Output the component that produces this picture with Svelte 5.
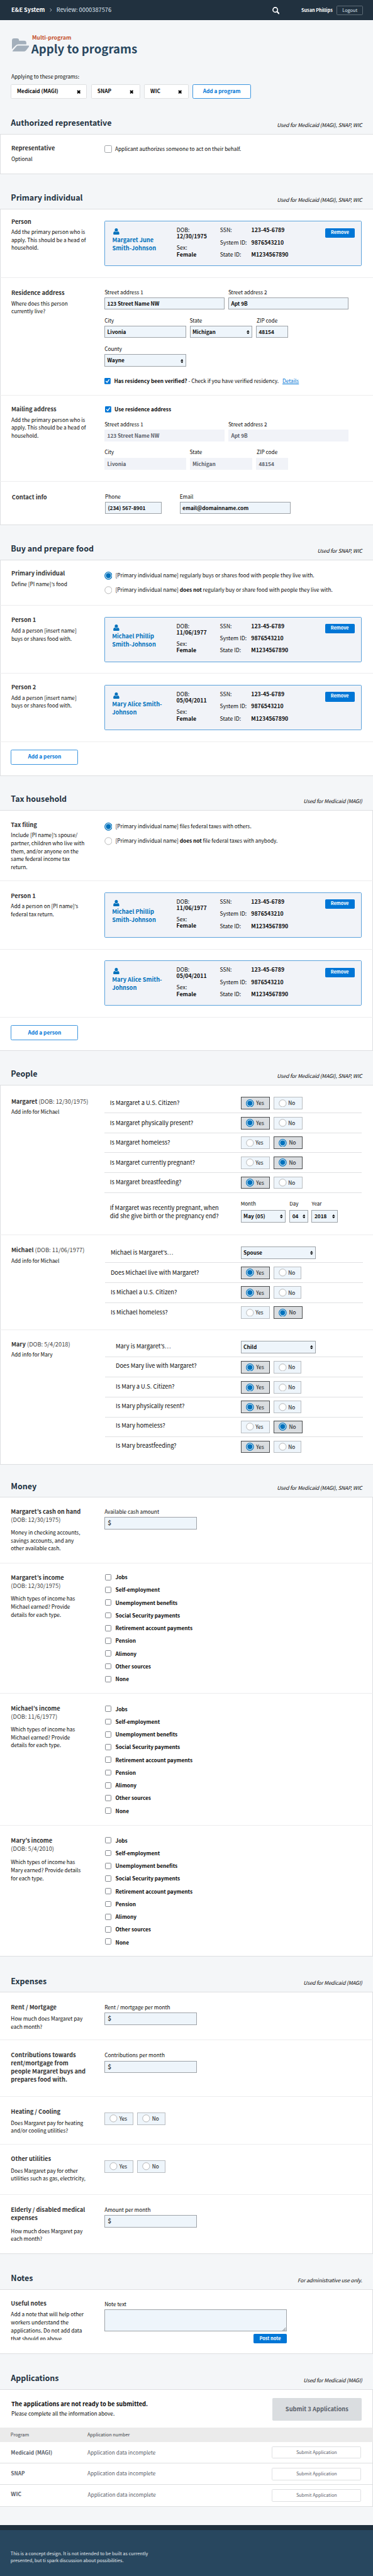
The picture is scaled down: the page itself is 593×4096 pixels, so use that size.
<script>
  const sources = [
    'Jobs', 'Self-employment', 'Unemployment benefits', 'Social Security payments',
    'Retirement account payments', 'Pension', 'Alimony', 'Other sources', 'None'
  ];
  const all = 'Used for Medicaid (MAGI), SNAP, WIC';
  const incomes = [
    { who: 'Margaret’s income', dob: '(DOB: 12/30/1975)', text: 'Which types of income has Michael earned? Provide details for each type.', cls: 'inc1' },
    { who: 'Michael’s income', dob: '(DOB: 11/6/1977)', text: 'Which types of income has Michael earned? Provide details for each type.', cls: 'inc2' },
    { who: 'Mary’s income', dob: '(DOB: 5/4/2010)', text: 'Which types of income has Mary earned? Provide details for each type.', cls: 'inc3' }
  ];
  const margaret = [
    { q: 'Is Margaret a U.S. Citizen?', a: 'Yes', h: 76.4 },
    { q: 'Is Margaret physically present?', a: 'Yes', h: 55 },
    { q: 'Is Margaret homeless?', a: 'No', h: 53.8 },
    { q: 'Is Margaret currently pregnant?', a: 'No', h: 54.9 },
    { q: 'Is Margaret breastfeeding?', a: 'Yes', h: 54.9 }
  ];
  const michael = [
    { q: 'Michael is Margaret’s…', select: 'Spouse', h: 76.9 },
    { q: 'Does Michael live with Margaret?', a: 'Yes', h: 55.1 },
    { q: 'Is Michael a U.S. Citizen?', a: 'Yes', h: 54.5 },
    { q: 'Is Michael homeless?', a: 'No', h: 55 }
  ];
  const mary = [
    { q: 'Mary is Margaret’s…', select: 'Child', h: 75.1 },
    { q: 'Does Mary live with Margaret?', a: 'Yes', h: 55 },
    { q: 'Is Mary a U.S. Citizen?', a: 'Yes', h: 55.5 },
    { q: 'Is Mary physically resent?', a: 'Yes', h: 53.9 },
    { q: 'Is Mary homeless?', a: 'No', h: 54.6 },
    { q: 'Is Mary breastfeeding?', a: 'Yes', h: 55 }
  ];
  const applications = [
    { name: 'Medicaid (MAGI)', cls: 'a1' },
    { name: 'SNAP', cls: 'a2' },
    { name: 'WIC', cls: 'a3' }
  ];
</script>

{#snippet head(title, note, h)}
  <header class="sec" style:height="{h}px"><h2>{title}</h2><em>{note}</em></header>
{/snippet}

{#snippet person(first, last, dob)}
  <div class="person">
    <div class="who">
      <svg class="user" viewBox="0 0 17 18"><ellipse cx="8.5" cy="4.6" rx="4.3" ry="4.6" /><path d="M4.2 8.6C1.6 8.8.2 11.2.2 14.8.2 16.8 1.2 18 3 18h11c1.800 0 2.800-1.200 2.800-3.200 0-3.600-1.400-6-4-6.200C11.600 9.700 10.200 10.400 8.500 10.400S5.400 9.700 4.200 8.600z" /></svg>
      <strong>{first}<br />{last}</strong>
    </div>
    <div class="bio">
      <div>DOB:<br /><b>{dob}</b></div>
      <div>Sex:<br /><b>Female</b></div>
    </div>
    <dl>
      <dt>SSN:</dt><dd>123-45-6789</dd>
      <dt>System ID:</dt><dd>9876543210</dd>
      <dt>State ID:</dt><dd>M1234567890</dd>
    </dl>
    <span class="solid remove">Remove</span>
  </div>
{/snippet}

{#snippet select(label, value, cls)}
  <div class="field {cls}">
    {#if label}<span class="lab">{label}</span>{/if}
    <div class="input sel"><span>{value}</span>
      <svg viewBox="0 0 8 11"><path d="M4 0l4 4.600H0zM4 11l4-4.600H0z" /></svg>
    </div>
  </div>
{/snippet}

{#snippet field(label, value, cls)}
  <div class="field {cls}"><span class="lab">{label}</span><div class="input">{value}</div></div>
{/snippet}

{#snippet radio(on)}
  <svg class="radio" viewBox="0 0 22 22">
    {#if on}
      <circle cx="11" cy="11" r="9.800" fill="#fff" stroke="#0071bc" stroke-width="2.200" /><circle cx="11" cy="11" r="7" fill="#0071bc" />
    {:else}
      <circle cx="11" cy="11" r="9.700" fill="#fff" stroke="#999" stroke-width="1.200" />
    {/if}
  </svg>
{/snippet}

{#snippet yesno(a, narrow)}
  <div class="yesno">
    <div class="opt" class:on={a === 'Yes'}>{@render radio(a === 'Yes')}<span>Yes</span></div>
    <div class="opt" class:on={a === 'No'} class:narrow={narrow && a !== 'No'}>{@render radio(a === 'No')}<span>No</span></div>
  </div>
{/snippet}

{#snippet tick()}
  <svg class="tick" viewBox="0 0 17 17"><rect width="17" height="17" rx="2.500" fill="#0076d6" /><path d="M4.400 9l3 3.200 5.300-7.700" fill="none" stroke="#fff" stroke-width="2.400" stroke-linecap="round" stroke-linejoin="round" /></svg>
{/snippet}

{#snippet questions(list, narrow)}
  {#each list as item}
    <div class="q" style:height="{item.h}px">
      <span class="ask">{item.q}</span>
      {#if item.select}{@render select('', item.select, 'w207')}{:else}{@render yesno(item.a, narrow)}{/if}
    </div>
  {/each}
{/snippet}

{#snippet times()}
  <svg class="times" viewBox="0 0 11 11"><path d="M1.700 1.700l7.600 7.600M9.300 1.700l-7.600 7.600" stroke="#000" stroke-width="3.400" /></svg>
{/snippet}

<div class="page">
  <nav>
    <b class="brand">E&amp;E System</b>
    <svg class="chev" viewBox="0 0 6 10"><path d="M1 .8L5 5 1 9.200" fill="none" stroke="#c8d0d8" stroke-width="1.500" /></svg>
    <span class="review">Review: 0000387576</span>
    <svg class="search" viewBox="0 0 20 20"><circle cx="8" cy="8" r="6.400" fill="none" stroke="#fff" stroke-width="2.800" /><path d="M12.800 12.800l5.200 5.200" stroke="#fff" stroke-width="3.600" stroke-linecap="round" /></svg>
    <b class="user-name">Susan Phillips</b>
    <span class="logout">Logout</span>
  </nav>

  <div class="title">
    <svg class="folder" viewBox="0 0 48 36"><path d="M0 6a6 6 0 0 1 6-6h7.500a6 6 0 0 1 6 6v.3h14a6 6 0 0 1 6 6v4H18c-3.500 0-6 1.200-8 3.700L0 30z" /><path d="M17 20h30.300c.8 0 1 .8.5 1.500L40 31.500C37.500 35 35.500 36 32 36H3c-1.500 0-1.800-1-.8-2.200L10.500 24c2.500-3 4-4 6.500-4z" /></svg>
    <div>
      <p class="multi">Multi-program</p>
      <h1>Apply to programs</h1>
    </div>
  </div>

  <p class="applying">Applying to these programs:</p>
  <div class="pills">
    <span class="pill p1">Medicaid (MAGI){@render times()}</span>
    <span class="pill p2">SNAP{@render times()}</span>
    <span class="pill p3">WIC{@render times()}</span>
    <span class="add prog">Add a program</span>
  </div>

  {@render head('Authorized representative', all, 97)}
  <div class="card left">
    <section class="auth">
      <div class="side"><h3>Representative</h3><p>Optional</p></div>
      <div class="main"><div class="line"><i class="box big"></i><span>Applicant authorizes someone to act on their behalf.</span></div></div>
    </section>
  </div>

  {@render head('Primary individual', all, 96.5)}
  <div class="card left">
    <section class="prim">
      <div class="side"><h3>Person</h3><p>Add the primary person who is apply. This should be a head of household.</p></div>
      <div class="main">{@render person('Margaret June', 'Smith-Johnson', '12/30/1975')}</div>
    </section>
    <section class="resid">
      <div class="side"><h3>Residence address</h3><p>Where does this person currently live?</p></div>
      <div class="main">
        <div class="fields">{@render field('Street address 1', '123 Street Name NW', 'w330')}{@render field('Street address 2', 'Apt 9B', 'w330')}</div>
        <div class="fields f2">{@render field('City', 'Livonia', 'w224')}{@render select('State', 'Michigan', 'w172')}{@render field('ZIP code', '48154', 'w88 inset')}</div>
        <div class="fields f3">{@render select('County', 'Wayne', 'w224 low')}</div>
        <div class="line verify">{@render tick()}<span><b>Has residency been verified?</b> - Check if you have verified residency.&nbsp; <u>Details</u></span></div>
      </div>
    </section>
    <section class="mail">
      <div class="side"><h3>Mailing address</h3><p>Add the primary person who is apply. This should be a head of household.</p></div>
      <div class="main off">
        <div class="line use">{@render tick()}<b>Use residence address</b></div>
        <div class="fields">{@render field('Street address 1', '123 Street Name NW', 'w330')}{@render field('Street address 2', 'Apt 9B', 'w330')}</div>
        <div class="fields f2">{@render field('City', 'Livonia', 'w224')}{@render field('State', 'Michigan', 'w172')}{@render field('ZIP code', '48154', 'w88 inset')}</div>
      </div>
    </section>
    <section class="contact">
      <div class="side"><h3>Contact info</h3></div>
      <div class="main"><div class="fields wide">{@render field('Phone', '(234) 567-8901', 'w155')}{@render field('Email', 'email@domainname.com', 'w304')}</div></div>
    </section>
  </div>

  {@render head('Buy and prepare food', 'Used for SNAP, WIC', 96.5)}
  <div class="card left">
    <section class="buy">
      <div class="side"><h3>Primary individual</h3><p>Define [PI name]’s food</p></div>
      <div class="main">
        <div class="line choice">{@render radio(true)}<span>[Primary individual name] regularly buys or shares food with people they live with.</span></div>
        <div class="line choice">{@render radio(false)}<span>[Primary individual name] <b>does not</b> regularly buy or share food with people they live with.</span></div>
      </div>
    </section>
    <section class="pers">
      <div class="side"><h3>Person 1</h3><p>Add a person [insert name] buys or shares food with.</p></div>
      <div class="main">{@render person('Michael Phillip', 'Smith-Johnson', '11/06/1977')}</div>
    </section>
    <section class="pers second">
      <div class="side"><h3>Person 2</h3><p>Add a person [insert name] buys or shares food with.</p></div>
      <div class="main">{@render person('Mary Alice Smith-', 'Johnson', '05/04/2011')}</div>
    </section>
    <section class="adder"><span class="add">Add a person</span></section>
  </div>

  {@render head('Tax household', 'Used for Medicaid (MAGI)', 96)}
  <div class="card right">
    <section class="tax">
      <div class="side"><h3>Tax filing</h3><p>Include [PI name]’s spouse/<br />partner, children who live with<br />them, and/or anyone on the<br />same federal income tax<br />return.</p></div>
      <div class="main">
        <div class="line choice">{@render radio(true)}<span>[Primary individual name] files federal taxes with others.</span></div>
        <div class="line choice">{@render radio(false)}<span>[Primary individual name] <b>does not</b> file federal taxes with anybody.</span></div>
      </div>
    </section>
    <section class="pers">
      <div class="side"><h3>Person 1</h3><p>Add a person on [PI name]’s federal tax return.</p></div>
      <div class="main">{@render person('Michael Phillip', 'Smith-Johnson', '11/06/1977')}</div>
    </section>
    <section class="pers">
      <div class="side"></div>
      <div class="main">{@render person('Mary Alice Smith-', 'Johnson', '05/04/2011')}</div>
    </section>
    <section class="adder short"><span class="add">Add a person</span></section>
  </div>

  {@render head('People', all, 95)}
  <div class="card left">
    <section class="mar">
      <div class="side"><h3>Margaret <span>(DOB: 12/30/1975)</span></h3><p>Add info for Michael</p></div>
      <div class="main qs">
        {@render questions(margaret, false)}
        <div class="q date">
          <span class="ask">If Margaret was recently pregnant, when<br />did she give birth or the pregnancy end?</span>
          <div class="fields">{@render select('Month', 'May (05)', 'w124')}{@render select('Day', '04', 'w51')}{@render select('Year', '2018', 'w72')}</div>
        </div>
      </div>
    </section>
    <section class="mic">
      <div class="side"><h3>Michael <span>(DOB: 11/06/1977)</span></h3><p>Add info for Michael</p></div>
      <div class="main qs shift">{@render questions(michael, true)}</div>
    </section>
    <section class="may">
      <div class="side"><h3>Mary <span>(DOB: 5/4/2018)</span></h3><p>Add info for Mary</p></div>
      <div class="main qs shift more">{@render questions(mary, true)}</div>
    </section>
  </div>

  {@render head('Money', all, 91)}
  <div class="card right">
    <section class="cash">
      <div class="side"><h3>Margaret’s cash on hand<br /><span>(DOB: 12/30/1975)</span></h3><p>Money in checking accounts, savings accounts, and any other available cash.</p></div>
      <div class="main money">{@render field('Available cash amount', '$', 'w253')}</div>
    </section>
    {#each incomes as inc}
      <section class="inc {inc.cls}">
        <div class="side"><h3>{inc.who}<br /><span>{inc.dob}</span></h3><p>{inc.text}</p></div>
        <div class="main">
          {#each sources as s}<div class="check"><i class="box"></i><b>{s}</b></div>{/each}
        </div>
      </section>
    {/each}
  </div>

  {@render head('Expenses', 'Used for Medicaid (MAGI)', 98.5)}
  <div class="card right exp">
    <section class="rent">
      <div class="side"><h3>Rent / Mortgage</h3><p>How much does Margaret pay each month?</p></div>
      <div class="main money">{@render field('Rent / mortgage per month', '$', 'w253')}</div>
    </section>
    <section class="contrib">
      <div class="side"><h3>Contributions towards rent/mortgage from<br />people Margaret buys and prepares food with.</h3></div>
      <div class="main money">{@render field('Contributions per month', '$', 'w253')}</div>
    </section>
    <section class="heat">
      <div class="side"><h3>Heating / Cooling</h3><p>Does Margaret pay for heating and/or cooling utilities?</p></div>
      <div class="main">{@render yesno('', true)}</div>
    </section>
    <section class="other">
      <div class="side"><h3>Other utilities</h3><p>Does Margaret pay for other utilities such as gas, electricity,</p></div>
      <div class="main">{@render yesno('', true)}</div>
    </section>
    <section class="elder">
      <div class="side"><h3>Elderly / disabled medical expenses</h3><p>How much does Margaret pay each month?</p></div>
      <div class="main money">{@render field('Amount per month', '$', 'w253')}</div>
    </section>
  </div>

  {@render head('Notes', 'For administrative use only.', 98.2)}
  <div class="card right">
    <section class="notes">
      <div class="side"><h3>Useful notes</h3><p>Add a note that will help other workers understand the applications. Do not add data that should go above.</p></div>
      <div class="main">
        <span class="lab">Note text</span>
        <div class="area"><svg viewBox="0 0 10 10"><path d="M0 10L10 0M3.500 10L10 3.500M7 10l3-3" stroke="#666" stroke-width="1.300" /></svg></div>
        <span class="solid post">Post note</span>
      </div>
    </section>
  </div>

  {@render head('Applications', 'Used for Medicaid (MAGI)', 98)}
  <div class="card right apps">
    <div class="ready">
      <div><strong>The applications are not ready to be submitted.</strong><p>Please complete all the information above.</p></div>
      <span class="submit">Submit 3 Applications</span>
    </div>
    <div class="trow th"><span>Program</span><span>Application number</span></div>
    {#each applications as a}
      <div class="trow {a.cls}"><b>{a.name}</b><span>Application data incomplete</span><span class="ghost">Submit Application</span></div>
    {/each}
  </div>

  <footer><p>This is a concept design. It is not intended to be built as currently<br />presented, but ti spark discussion about possibilities.</p></footer>
</div>

<style>
  :global(body) { background: #f4f6f8; overflow: hidden; }
  .page {
    zoom: 0.57888;
    height: 7076px;
    overflow: hidden;
    background: #f4f6f8;
    color: #0a0a0a;
    font: 14.3px/22px "Noto Sans CJK JP", "Noto Sans CJK SC", sans-serif;
    white-space: nowrap;
  }
  .page * { box-sizing: border-box; }
  p, h1, h2, h3, dl, dd { margin: 0; }
  svg { display: block; flex: none; }
  b, strong, h1, h2, h3 { font-weight: 700; }

  nav { height: 55px; display: flex; align-items: center; background: #21313f; color: #fff; padding: 0 27px 0 31px; font-size: 16.08px; }
  .brand { font-size: 15.9px; margin-right: 14px; }
  .chev { width: 6px; height: 10px; margin-right: 12px; margin-top: 1px; }
  .review { color: #dce4ef; flex: 1; }
  .brand, .review { padding-bottom: 2px; }
  .search { width: 20px; height: 20px; margin: 3px 60px 0 0; }
  .user-name { font-size: 12.5px; width: 97px; }
  .logout { width: 73px; height: 26px; line-height: 24px; border: 1px solid #5f6c77; border-radius: 3px; font-size: 12.6px; text-align: center; color: #dce4ef; margin-top: 1px; }

  .title { display: flex; height: 144.300px; padding: 38.400px 0 0 32px; }
  .folder { width: 48px; height: 36px; margin-top: 11.600px; fill: #a3afbb; }
  .multi { font-size: 15.1px; font-weight: 700; color: #c5502c; margin-left: 8px; }
  h1 { font-size: 32.17px; line-height: 36px; color: #28475f; margin: .8px 0 0 6px; }
  .applying { padding-left: 31px; height: 31.700px; }
  .pills { display: flex; gap: 10.700px; padding-left: 29px; height: 41px; }
  .pill { display: flex; justify-content: space-between; align-items: center; border: 1px solid #dfe0e2; border-radius: 3px; background: #fff; font-weight: 700; padding: 0 16px 3px 16px; }
  .pill .times { margin-top: 3.500px; }
  .p1 { width: 210px; } .p2 { width: 135px; } .p3 { width: 123px; }
  .times { width: 11px; height: 11px; }
  .add { display: flex; align-items: center; justify-content: center; width: 185px; height: 41px; border: 1px solid #3b95df; border-radius: 4px; background: #fff; color: #0076d6; font-weight: 700; padding-bottom: 3px; }
  .add.prog { width: 160px; }

  .sec { display: flex; justify-content: space-between; align-items: flex-end; padding: 0 30px 14.300px; border-bottom: 1px solid #dddfe1; }
  h2 { font-size: 21.5px; line-height: 30px; color: #21313f; }
  em { letter-spacing: -.2px; }

  .card { background: #fff; }
  .left { box-shadow: inset 1.730px 0 #dddfe1; }
  .right { box-shadow: inset -1.730px 0 #dddfe1; }
  section { display: grid; grid-template-columns: 287px 1fr; border-bottom: 2px solid #ededee; }
  section:last-child { border-bottom-color: #dddfe1; }
  .side { padding: calc(var(--s) + .5px) 0 0 31px; width: 240px; white-space: normal; }
  .right .side { padding-left: 30px; }
  .main { padding-top: var(--m); }
  h3 { font-size: 16.08px; line-height: 22px; color: #333; }
  h3 span { font-weight: 400; color: #444; white-space: nowrap; }
  .mar h3 { white-space: nowrap; }
  .side p { margin-top: 6.500px; }
  .exp .side p { margin-top: 9.300px; }

  .auth { height: 109px; --s: 27px; --m: 27.800px; }
  .prim { height: 189px; --s: 22px; --m: 32px; }
  .resid { height: 324px; --s: 29.400px; --m: 27.300px; }
  .mail { height: 236px; --s: 25px; --m: 24.800px; }
  .contact { height: 119px; --s: 31px; --m: 28.800px; }
  .contact h3 { padding-left: 1.500px; }
  .buy { height: 125px; --s: 24.500px; --m: 29.800px; }
  .pers { height: 187px; --s: 27.500px; --m: 30px; }
  .second { --s: 25px; }
  .adder { display: block; height: 93px; padding: 21px 0 0 30px; }
  .adder.short { height: 92px; }
  .tax { height: 194px; --s: 26.500px; --m: 30.800px; }
  .mar { height: 410.300px; --s: 31.500px; --m: 0px; }
  .mic { height: 261.400px; --s: 29.700px; --m: 0px; }
  .may { height: 369.300px; --s: 27.300px; --m: 0px; }
  .cash { height: 180.700px; --s: 27px; --m: 27.800px; }
  .cash p, .inc p { margin-top: 12.500px; }
  .inc1 { height: 358px; --s: 28px; --m: 19.600px; }
  .inc2 { height: 362.100px; --s: 29px; --m: 23.600px; }
  .inc3 { height: 360.200px; --s: 29px; --m: 22.500px; }
  .inc3 p { margin-top: 15.500px; }
  .rent { height: 131.500px; --s: 28.500px; --m: 28.500px; }
  .contrib { height: 154px; --s: 29px; --m: 29.500px; }
  .heat { height: 132px; --s: 29px; --m: 44px; }
  .other { height: 138px; --s: 28px; --m: 43px; }
  .elder { height: 162.300px; --s: 29px; --m: 29.400px; }
  .exp .elder p { margin-top: 14.100px; }
  .notes { height: 177.500px; --s: 26.500px; --m: 28.300px; }
  .notes p { margin-top: 7.800px; height: 82px; overflow: hidden; }

  .line { display: flex; align-items: center; height: 22px; }
  .box { display: block; flex: none; width: 17px; height: 17px; border: 1px solid #85898f; border-radius: 3px; background: #fff; }
  .box.big { width: 20px; height: 20px; margin: 3px 9px 0 0; border-color: #a3a6aa; border-radius: 4px; }
  .tick { width: 17px; height: 17px; margin: 3px 9.500px 0 0; }
  .use .tick { margin-left: 1px; }
  u { color: #0076d6; margin-left: 4px; }
  .radio { width: 22px; height: 22px; }
  .choice { height: 40px; align-items: flex-start; }
  .choice .radio { margin: 2px 9px 0 -1px; }
  .check { display: flex; align-items: center; height: 35px; gap: 11px; padding-left: 2px; }
  .check .box { margin-top: 1px; }
  .inc3 .check:last-child .box { margin-top: -3px; }

  .fields { display: flex; gap: 10px; }
  .fields.wide { gap: 50px; padding-left: 1.500px; }
  .f2 { margin-top: 17.700px; }
  .f3 { margin-top: 19px; }
  .verify { margin-top: 27px; }
  .use { margin-bottom: 19px; }
  .field { display: flex; flex-direction: column; }
  .lab { display: block; height: 26px; }
  .inset .lab { padding-left: 2px; }
  .input { height: 34px; border: 1px solid #9ea3a8; background: #eef5fb; font-weight: 700; padding: 0 6px 2px; line-height: 29.500px; }
  .off .input { border-color: #f1f3f8; background: #f1f3f8; color: #5b616b; }
  .sel { display: flex; justify-content: space-between; }
  .sel svg { width: 8px; height: 11px; margin-top: 10px; }
  .low .sel svg { margin-top: 12px; }
  .money .input { font-size: 17px; color: #444; padding-left: 7px; }
  .w330 { width: 330px; } .w224 { width: 224px; } .w172 { width: 172px; } .w88 { width: 88px; }
  .w155 { width: 155px; } .w304 { width: 304px; } .w124 { width: 124px; } .w51 { width: 51px; }
  .w72 { width: 72px; } .w207 { width: 207px; } .w253 { width: 253px; }

  .person { display: grid; grid-template-columns: 177px 119px 289px 81px; width: 707px; height: 125px; border: 1px solid #5ba2db; border-radius: 3px; background: #f1f3f8; padding-left: 19.500px; font-size: 15.1px; }
  .left .pers .person, .right .person { margin-left: -.5px; }
  .user { width: 17px; height: 18px; margin: 19px 0 3.500px 3px; fill: #0071bc; }
  .who strong { font-size: 16px; color: #0071bc; display: block; }
  .bio { line-height: 18px; padding-top: 15.500px; }
  .bio div { margin-bottom: 13px; }
  .person dl { display: grid; grid-template-columns: 86px 1fr; grid-auto-rows: 33.200px; line-height: 33.200px; padding-top: 7.700px; }
  dd { font-weight: 700; }
  .solid { display: block; background: #0076d6; color: #fff; font-weight: 700; border-radius: 3px; font-size: 12.5px; text-align: center; height: 26px; line-height: 24px; }
  .remove { margin-top: 18.500px; }

  .q { display: flex; align-items: flex-end; justify-content: space-between; width: 707px; padding: 0 0 9.500px 15px; border-bottom: 1px solid #e0e1e3; }
  .q:last-child { border-bottom-color: transparent; }
  .ask { font-size: 16.08px; margin-bottom: 7.200px; }
  .q > :global(:last-child) { width: 333px; }
  .q > .field .input { width: 207px; }
  .shift .q { margin-left: 2px; width: 707px; }
  .shift .q > :global(:last-child) { width: 335px; }
  .more .q { padding-left: 29px; }
  .more .ask { margin-bottom: 9.700px; }
  .date { align-items: flex-start; }
  .date .ask { line-height: 23px; padding-top: 29.600px; }
  .date .fields { padding-top: 20px; }
  .date .lab { height: 27px; font-size: 14px; }
  .yesno { display: flex; gap: 10px; }
  .opt { display: flex; align-items: center; width: 80px; height: 34px; border: 1px solid #b9bdc1; background: #eef5fb; padding-left: 12.500px; }
  .opt span { margin: 0 0 1px 4.500px; }
  .opt.on { background: #dadde0; border-color: #4a4c4e; }
  .opt.on span { margin-left: 6.500px; }
  .narrow { width: 77px; }

  .area { display: flex; align-items: flex-end; justify-content: flex-end; width: 500px; height: 60px; border: 1px solid #9ea3a8; background: #eef5fb; }
  .area svg { width: 9px; height: 9px; }
  .post { width: 90px; margin: 7px 0 0 410px; font-size: 12.7px; }

  .ready { display: flex; justify-content: space-between; height: 104px; padding: 23px 31px 0 31px; }
  .ready > div { padding-top: 4.500px; }
  .ready strong { font-size: 16.2px; display: block; }
  .ready p { margin-top: 3.300px; }
  .submit { width: 246px; height: 61px; line-height: 61px; border-radius: 3px; background: #dadde0; color: #5b616b; font-size: 16.08px; font-weight: 700; text-align: center; }
  .trow { display: grid; grid-template-columns: 210px 507px 245px; align-items: center; padding-left: 30px; color: #5b616b; border-bottom: 1px solid #dddfe1; }
  .th { height: 39px; background: #ebebeb; font-size: 12.6px; color: #3a3f47; padding-left: 29px; grid-template-columns: 211px 1fr; border: 0; }
  .a1 { height: 59.300px; } .a2 { height: 59px; } .a3 { height: 59.500px; }
  .a2 > :not(.ghost) { margin-bottom: 3px; }
  .a3 > :not(.ghost) { margin-bottom: 5px; }
  .a3 b { font-size: 15.2px; }
  .a3 span:not(.ghost) { padding-left: 1px; }
  .ghost { height: 34px; line-height: 31px; border: 1px solid #dfe0e2; border-radius: 3px; font-size: 12.55px; text-align: center; }

  footer { margin-top: 51.200px; height: 140px; border-top: 14.700px solid #1e2f3d; background: #28475f; color: #e4e9ee; padding: 55px 0 0 29px; font-size: 12.6px; line-height: 18px; }
</style>
